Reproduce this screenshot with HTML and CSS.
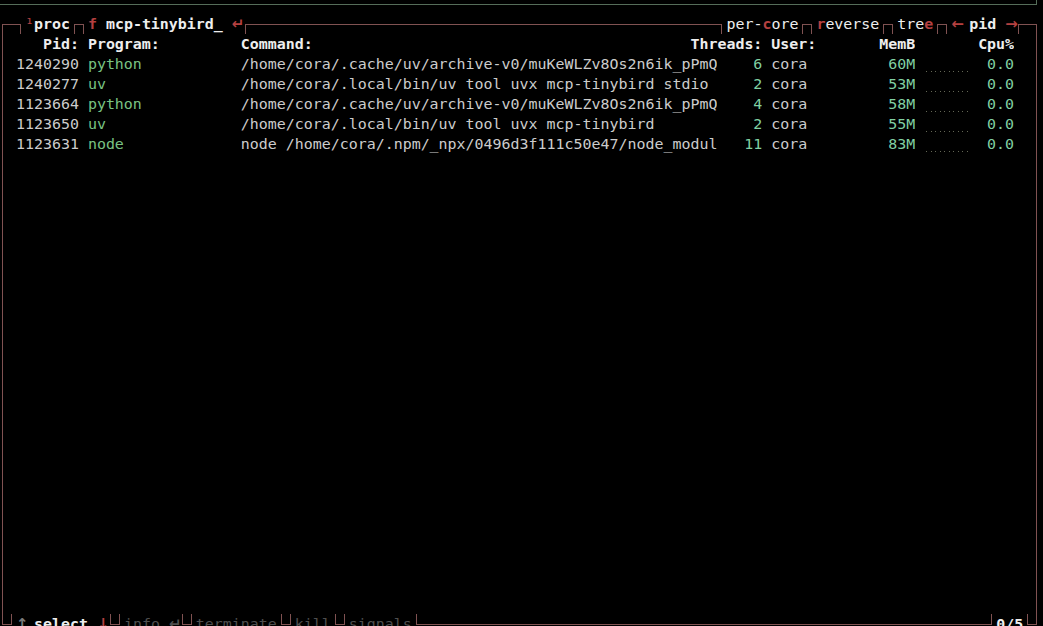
FILE: index.html
```html
<!DOCTYPE html>
<html>
<head>
<meta charset="utf-8">
<title>btop proc</title>
<link rel="stylesheet" href="styles.css">
</head>
<body>
<div class="term">
  <div class="row cpu-edge"><span class="fill g"></span><span class="c-br g"></span></div>

  <div class="row title">
    <span class="c-tl"></span><span class="fill w1"></span>
    <span class="tlab"><span class="sup">¹</span><b class="tt">proc</b></span>
    <span class="tlab"><span class="hi">f</span> <b class="tt">mcp-tinybird_</b> <span class="hi arw">↵</span></span>
    <span class="fill"></span>
    <span class="tlab">per-<span class="hi">c</span>ore</span>
    <span class="tlab"><span class="hi">r</span>everse</span>
    <span class="tlab">tre<span class="hi">e</span></span>
    <span class="tlab"><span class="hi arw">←</span> <b class="tt">pid</b> <span class="hi arw">→</span></span>
    <span class="fill w1"></span><span class="c-tr"></span>
  </div>

  <div class="mid">
    <span class="vl"></span>
    <div class="list">
      <div class="line head"><span class="pid">Pid:</span><span class="prog">Program:</span><span class="cmd hcmd">Command:</span><span class="thr hthr">Threads:</span><span class="user">User:</span><span class="mem">MemB</span><span class="graph empty"></span><span class="cpu">Cpu%</span></div>
      <div class="line"><span class="pid">1240290</span><span class="prog">python</span><span class="cmd">/home/cora/.cache/uv/archive-v0/muKeWLZv8Os2n6ik_pPmQ</span><span class="thr">6</span><span class="user">cora</span><span class="mem">60M</span><span class="graph"></span><span class="cpu">0.0</span></div>
      <div class="line"><span class="pid">1240277</span><span class="prog">uv</span><span class="cmd">/home/cora/.local/bin/uv tool uvx mcp-tinybird stdio</span><span class="thr">2</span><span class="user">cora</span><span class="mem">53M</span><span class="graph"></span><span class="cpu">0.0</span></div>
      <div class="line"><span class="pid">1123664</span><span class="prog">python</span><span class="cmd">/home/cora/.cache/uv/archive-v0/muKeWLZv8Os2n6ik_pPmQ</span><span class="thr">4</span><span class="user">cora</span><span class="mem">58M</span><span class="graph"></span><span class="cpu">0.0</span></div>
      <div class="line"><span class="pid">1123650</span><span class="prog">uv</span><span class="cmd">/home/cora/.local/bin/uv tool uvx mcp-tinybird</span><span class="thr">2</span><span class="user">cora</span><span class="mem">55M</span><span class="graph"></span><span class="cpu">0.0</span></div>
      <div class="line"><span class="pid">1123631</span><span class="prog">node</span><span class="cmd">node /home/cora/.npm/_npx/0496d3f111c50e47/node_modul</span><span class="thr">11</span><span class="user">cora</span><span class="mem">83M</span><span class="graph"></span><span class="cpu">0.0</span></div>
    </div>
    <span class="vl"></span>
  </div>

  <div class="row bottom">
    <span class="c-bl"></span>
    <span class="blab"><span class="arrow arw">↑</span> <b class="tt">select</b> <span class="hi arw">↓</span></span>
    <span class="blab dim">info <span class="arw">↵</span></span>
    <span class="blab dim">terminate</span>
    <span class="blab dim">kill</span>
    <span class="blab dim">signals</span>
    <span class="fill"></span>
    <span class="blab"><b class="tt">0/5</b></span>
    <span class="c-br"></span>
  </div>
</div>
</body>
</html>
```

FILE: styles.css
```css
html, body {
  margin: 0;
  padding: 0;
  background: #000000;
}

body {
  width: 1043px;
  height: 626px;
  overflow: hidden;
  font-family: "DejaVu Sans Mono", "Liberation Mono", monospace;
  font-size: 14.95px;
  line-height: 20px;
  color: #cccccc;
}

.term {
  --bc: #805252;
  width: 116ch;
  margin-top: -6px;
  margin-left: -2px;
  display: flex;
  flex-direction: column;
}

.row {
  display: flex;
  height: 20px;
  white-space: pre;
}

.cpu-edge { --bc: #556d59; }

/* horizontal fill line */
.fill {
  flex: 1 1 auto;
  background: linear-gradient(var(--bc), var(--bc)) 0 10px / 100% 1px no-repeat;
}
.fill.w1 { flex: 0 0 1ch; }

/* box corners */
.c-tl, .c-tr, .c-bl, .c-br, .vl {
  flex: 0 0 1ch;
  width: 1ch;
}
.c-tl {
  background:
    linear-gradient(var(--bc), var(--bc)) 4px 10px / calc(100% - 4px) 1px no-repeat,
    linear-gradient(var(--bc), var(--bc)) 4px 10px / 1px 10px no-repeat;
}
.c-tr {
  background:
    linear-gradient(var(--bc), var(--bc)) 0 10px / 5px 1px no-repeat,
    linear-gradient(var(--bc), var(--bc)) 4px 10px / 1px 10px no-repeat;
}
.c-bl {
  background:
    linear-gradient(var(--bc), var(--bc)) 4px 10px / calc(100% - 4px) 1px no-repeat,
    linear-gradient(var(--bc), var(--bc)) 4px 0 / 1px 11px no-repeat;
}
.c-br {
  background:
    linear-gradient(var(--bc), var(--bc)) 0 10px / 5px 1px no-repeat,
    linear-gradient(var(--bc), var(--bc)) 4px 0 / 1px 11px no-repeat;
}
.vl {
  background: linear-gradient(var(--bc), var(--bc)) 4px 0 / 1px 100% no-repeat;
}

/* title labels ┐text┌ */
.tlab {
  flex: 0 0 auto;
  padding: 0 1ch;
  color: #eeeeee;
  background:
    linear-gradient(var(--bc), var(--bc)) left 0 top 10px / 5px 1px no-repeat,
    linear-gradient(var(--bc), var(--bc)) right 0 top 10px / 5px 1px no-repeat,
    linear-gradient(var(--bc), var(--bc)) left 4px top 10px / 1px 10px no-repeat,
    linear-gradient(var(--bc), var(--bc)) right 4px top 10px / 1px 10px no-repeat;
}

/* bottom labels ┘text└ */
.blab {
  flex: 0 0 auto;
  padding: 0 1ch;
  color: #eeeeee;
  background:
    linear-gradient(var(--bc), var(--bc)) left 0 top 10px / 5px 1px no-repeat,
    linear-gradient(var(--bc), var(--bc)) right 0 top 10px / 5px 1px no-repeat,
    linear-gradient(var(--bc), var(--bc)) left 4px top 0 / 1px 11px no-repeat,
    linear-gradient(var(--bc), var(--bc)) right 4px top 0 / 1px 11px no-repeat;
}

.tt { font-weight: bold; color: #eeeeee; }
.hi { color: #b54040; font-weight: bold; }
.sup { color: #b54040; }
.arrow { color: #7a7a7a; }
.blab.dim { color: #4e4e4e; }

/* arrows: larger glyphs kept in a single 9px cell */
.arw {
  display: inline-block;
  width: 9px;
  overflow: visible;
  text-align: center;
  font-family: "DejaVu Sans", sans-serif;
  font-size: 15px;
  font-weight: bold;
  vertical-align: top;
}

/* middle section */
.mid {
  display: flex;
  height: 580px;
}
.mid .vl { align-self: stretch; }

.list {
  flex: 1 1 auto;
  display: flex;
  flex-direction: column;
  padding-left: 1ch;
}

.line {
  display: flex;
  height: 20px;
  white-space: pre;
}

.line span { flex: 0 0 auto; overflow: hidden; }

.pid { width: 7ch; text-align: right; margin-right: 1ch; color: #cccccc; }
.prog { width: 17ch; color: #79c383; }
.cmd { width: 53ch; color: #cccccc; }
.thr { width: 5ch; text-align: right; color: #80d0a3; }
.user { width: 11ch; margin-left: 1ch; color: #cccccc; }
.mem { width: 5ch; text-align: right; color: #80d0a3; }
.graph {
  width: 5ch;
  margin-left: 1ch;
  background: repeating-linear-gradient(to right, #646856 0 1px, transparent 1px 4.5px) 2px 17px / calc(100% - 2px) 1px no-repeat;
}
.graph.empty { background: none; }
.cpu { width: 5ch; text-align: right; color: #80d0a3; }

.head span { font-weight: bold; color: #eeeeee; }
.head .hcmd { width: 50ch; }
.head .hthr { width: 8ch; }
```
